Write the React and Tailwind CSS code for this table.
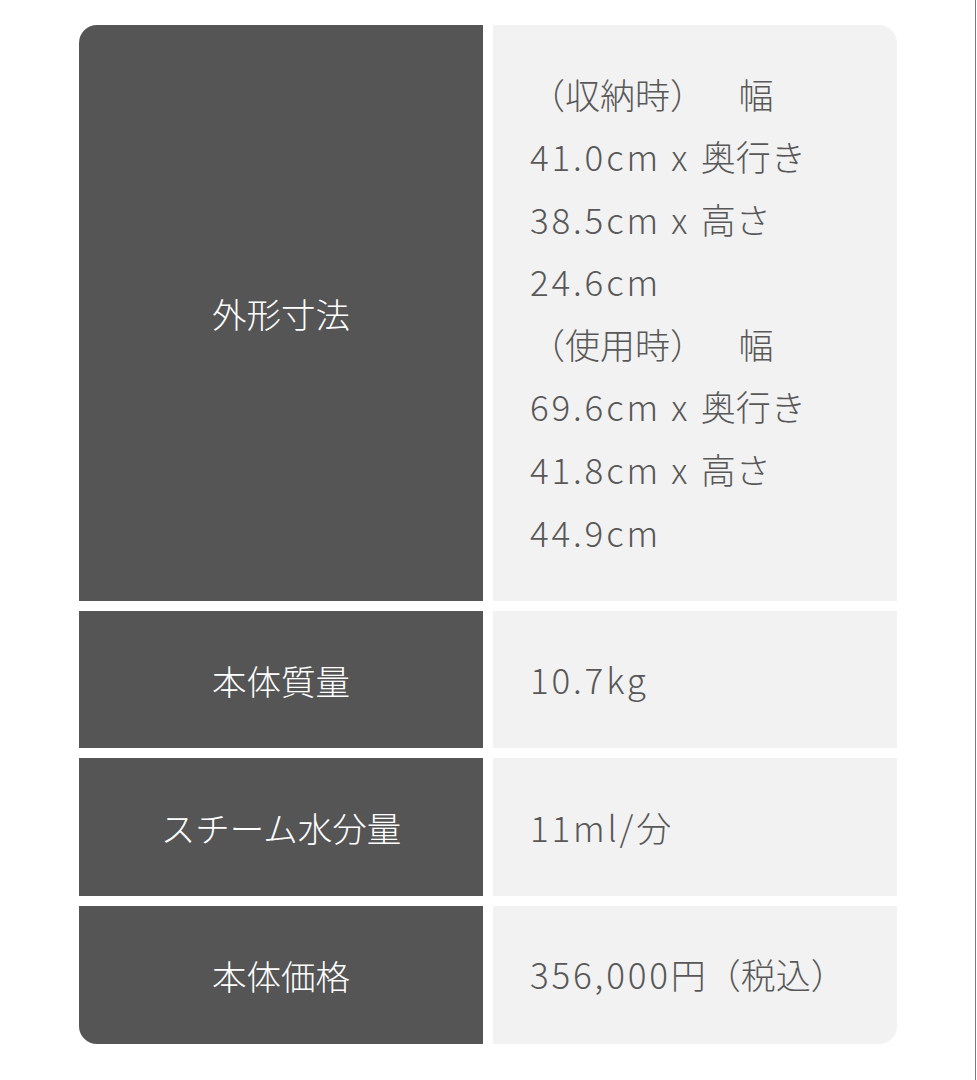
import React from "react";

// 製品仕様テーブル（左：項目名 / 右：値）
const FONT = {
  fontFamily: '"Noto Sans CJK JP", "Noto Sans", sans-serif',
};

// 英数字だけ少し字間を広げる
const L = ({ children }) => <span className="tracking-[0.08em]">{children}</span>;

const specs = [
  {
    label: "外形寸法",
    lines: [
      <>
        （収納時）　<span className="ml-[16px]">幅</span>
      </>,
      <>
        <L>41.0cm x </L>奥行き
      </>,
      <>
        <L>38.5cm x </L>高さ
      </>,
      <L>24.6cm</L>,
      <>
        （使用時）　<span className="ml-[16px]">幅</span>
      </>,
      <>
        <L>69.6cm x </L>奥行き
      </>,
      <>
        <L>41.8cm x </L>高さ
      </>,
      <L>44.9cm</L>,
    ],
  },
  { label: "本体質量", lines: [<L>10.7kg</L>] },
  {
    label: "スチーム水分量",
    lines: [
      <>
        <L>11ml/</L>分
      </>,
    ],
  },
  {
    label: "本体価格",
    lines: [
      <>
        <L>356,000</L>円（税込）
      </>,
    ],
  },
];

export default function App() {
  return (
    <div
      className="w-[976px] min-h-[1080px] bg-white border-r border-[#7a7a7a] pt-[25px] pl-[79px]"
      style={FONT}
    >
      <div className="w-[818px] rounded-[18px] overflow-hidden flex flex-col gap-[10px]">
        {specs.map((s, i) => (
          <div key={i} className="grid grid-cols-2 gap-[10px]">
            <div className="bg-[#555555] flex items-center justify-center text-white text-[34.5px] font-light leading-[1.8]">
              {s.label}
            </div>
            <div className="bg-[#f2f2f2] py-[37.5px] pl-[37px] pr-4 text-[#585858] text-[35px] font-light leading-[62.6px]">
              {s.lines.map((line, j) => (
                <div key={j} className="whitespace-nowrap">
                  {line}
                </div>
              ))}
            </div>
          </div>
        ))}
      </div>
    </div>
  );
}
